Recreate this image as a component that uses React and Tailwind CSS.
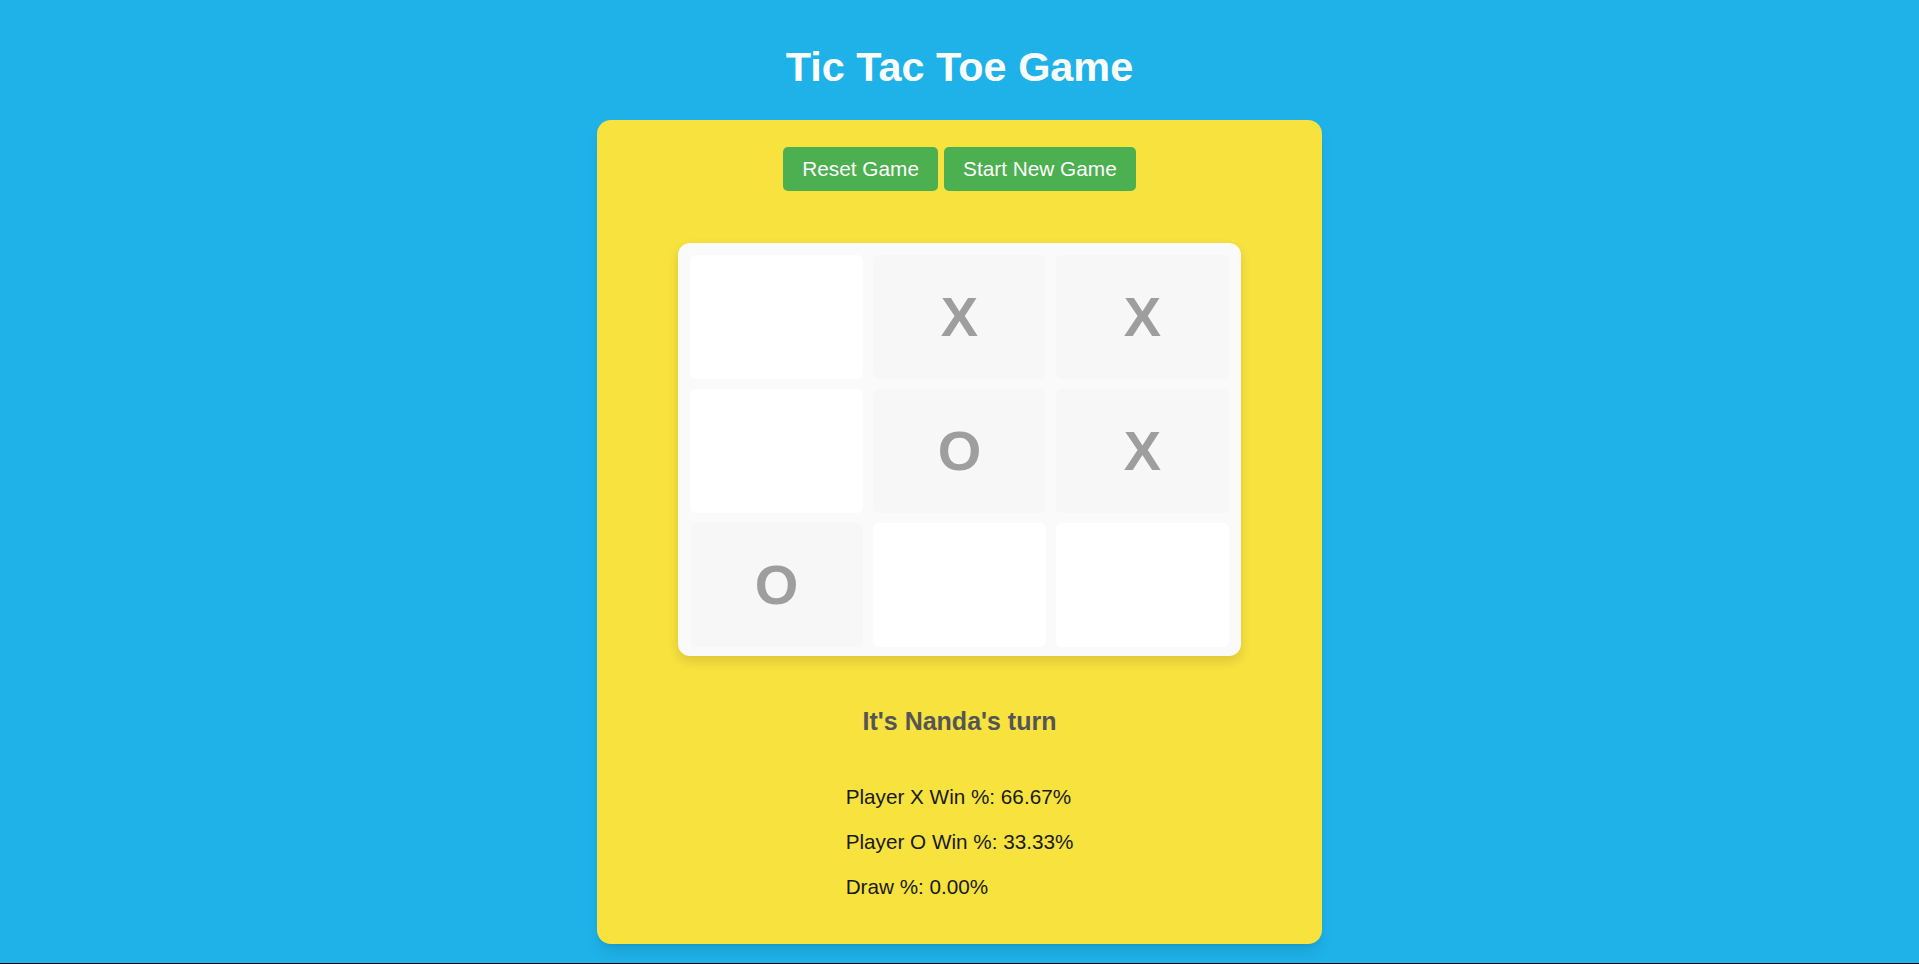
import React, { useState } from "react";

const FONT = { fontFamily: '"Liberation Sans", Arial, sans-serif' };

const INITIAL = ["", "X", "X", "", "O", "X", "O", "", ""];

export default function App() {
  const [board, setBoard] = useState(INITIAL);

  const handleReset = () => setBoard(Array(9).fill(""));
  const handleNewGame = () => setBoard(Array(9).fill(""));

  return (
    <div
      className="min-h-[964px] bg-[#1eb2e9] border-b border-black flex flex-col items-center"
      style={FONT}
    >
      <h1 className="pt-[44px] mb-[30px] text-[41.4px] leading-[46px] font-bold text-white">
        Tic Tac Toe Game
      </h1>

      <div className="w-[725px] h-[824px] bg-[#f7e23e] rounded-[14px] shadow-lg pt-[27px] flex flex-col items-center">
        <div className="flex gap-[6px]">
          <button
            onClick={handleReset}
            className="h-[44px] px-[19px] bg-[#4caf50] text-white text-[20.8px] rounded-[5px]"
          >
            Reset Game
          </button>
          <button
            onClick={handleNewGame}
            className="h-[44px] px-[19px] bg-[#4caf50] text-white text-[20.8px] rounded-[5px]"
          >
            Start New Game
          </button>
        </div>

        <div className="mt-[52px] w-[563px] px-[12px] pt-[12px] pb-[9px] bg-[#fafafa] rounded-[12px] shadow-[0_5px_12px_rgba(0,0,0,0.12)] grid grid-cols-3 gap-[10px]">
          {board.map((cell, i) => (
            <div
              key={i}
              className={`h-[124px] rounded-[6px] flex items-center justify-center text-[56px] font-bold text-[#9e9e9e] ${
                cell ? "bg-[#f7f7f7]" : "bg-white"
              }`}
            >
              {cell}
            </div>
          ))}
        </div>

        <p className="mt-[51px] text-[25px] leading-[29px] font-bold text-[#555555]">
          It's Nanda's turn
        </p>

        <div className="mt-[49px] flex flex-col gap-[22px] text-[20.7px] leading-[23px] text-[#1a1a1a]">
          <p>Player X Win %: 66.67%</p>
          <p>Player O Win %: 33.33%</p>
          <p>Draw %: 0.00%</p>
        </div>
      </div>
    </div>
  );
}
